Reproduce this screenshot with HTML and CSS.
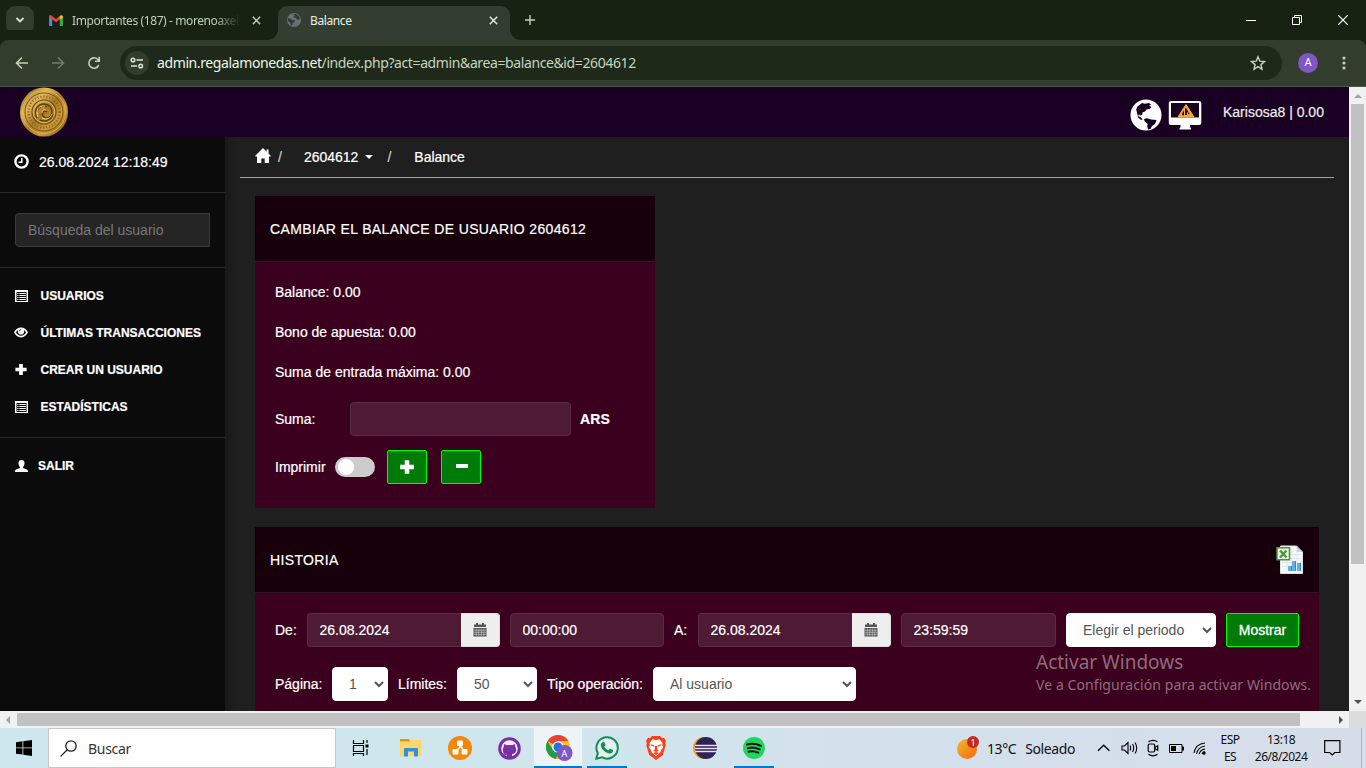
FILE: index.html
```
<!DOCTYPE html>
<html lang="es">
<head>
<meta charset="utf-8">
<title>Balance</title>
<link rel="stylesheet" href="styles.css">
</head>
<body>
<svg width="0" height="0" class="defs">
  <defs>
    <symbol id="list" viewBox="0 0 13 12"><path fill="#fff" fill-rule="evenodd" d="M0 0h13v12H0zM1.500 2v9h10V2z"/><path stroke="#fff" d="M2.300 3.500h1.200M4.300 3.500h6.500M2.300 5.500h1.200M4.300 5.500h6.500M2.300 7.500h1.200M4.300 7.500h6.500M2.300 9.500h1.200M4.300 9.500h6.500"/></symbol>
    <symbol id="plus" viewBox="0 0 14 14"><path fill="#fff" d="M5 1h4v4h4v4H9v4H5V9H1V5h4z"/></symbol>
    <symbol id="calendar" viewBox="0 0 14 14"><path fill="#555" d="M1 1.500h2V0h2v1.500h4V0h2v1.500h2v2.500H1z"/><path fill="#555" d="M.5 5h13V13.500H.5z"/><path stroke="#ccc" stroke-width=".6" d="M.8 7.300h12.400M.8 9.300h12.400M.8 11.300h12.400M3.300 5.500v7.500M5.800 5.500v7.500M8.300 5.500v7.500M10.800 5.500v7.500"/></symbol>
  </defs>
</svg>
<div class="screen">
  <div class="tabstrip">
    <div class="tab-search"><svg width="10" height="10" viewBox="0 0 10 10"><path d="M1.500 3l3.500 3.500L8.500 3" fill="none" stroke="#d8e5d2" stroke-width="1.800"/></svg></div>
    <div class="tab idle">
      <svg width="14" height="11" viewBox="0 0 14 11"><path fill="#4285f4" d="M0 2v8a1 1 0 0 0 1 1h2.200V3.800z"/><path fill="#34a853" d="M14 2v8a1 1 0 0 1-1 1h-2.200V3.800z"/><path fill="#ea4335" d="M0 2.300V1.500Q.5-.6 2.500.5L7 3.900 11 .8v3.500L7 7.300 0 2.300z"/><path fill="#fbbc04" d="M10.800 1l1-.7Q14-.3 14 2v.4l-3.200 2.300z"/></svg>
      <span class="tab-title fade">Importantes (187) - morenoaxel</span>
      <svg class="x" width="9" height="9" viewBox="0 0 9 9"><path d="M.8.8l7.400 7.400M8.200.8L.8 8.200" stroke="#bdd0b7" stroke-width="1.500"/></svg>
    </div>
    <div class="tab active">
      <svg width="14" height="14" viewBox="0 0 14 14"><circle cx="7" cy="7" r="7" fill="#686e72"/><path fill="#343e30" d="M1 5l2 .5 2 1.500 3 .3-.5 1.500-2 1.200v2L4 12.500 3 9.500 1 8zM6 1.500l1.500 1-.8 2 2.300.6 1 1.600 3-.5-1-3L9 1z"/></svg>
      <span class="tab-title">Balance</span>
      <svg class="x" width="9" height="9" viewBox="0 0 9 9"><path d="M.8.8l7.400 7.400M8.200.8L.8 8.200" stroke="#e1ebdc" stroke-width="1.500"/></svg>
    </div>
    <svg class="new-tab" width="10" height="10" viewBox="0 0 10 10"><path d="M5 0v10M0 5h10" stroke="#bdd0b7" stroke-width="1.400"/></svg>
    <div class="win-buttons">
      <svg width="10" height="10"><path d="M0 5.500h10" stroke="#fff"/></svg>
      <svg width="10" height="10" fill="none" stroke="#fff"><path d="M.5 2.500h7v7h-7zM2.500 2V.5h7v7H8"/></svg>
      <svg width="10" height="10"><path d="M0 0l10 10M10 0L0 10" stroke="#fff" stroke-width="1.200"/></svg>
    </div>
  </div>
  <div class="toolbar">
    <svg class="nav" width="14" height="14" fill="none" stroke="#c2d4bb" stroke-width="1.600"><path d="M13 7H2M7 1.500L1.500 7 7 12.500"/></svg>
    <svg class="nav" width="14" height="14" fill="none" stroke="#6d7c67" stroke-width="1.600"><path d="M1 7h11M7 1.500L12.500 7 7 12.500"/></svg>
    <svg class="nav" width="14" height="14" fill="none" stroke="#c2d4bb" stroke-width="1.600"><path d="M11.800 9.200A5.200 5.200 0 1 1 10.900 3.500L12.300 5M12.300 .8v4.400H8"/></svg>
    <div class="omnibox">
      <span class="site-info"><svg width="14" height="12" fill="none" stroke="#dbe7d6" stroke-width="1.500"><circle cx="3" cy="3" r="1.800"/><path d="M6.500 3H13M1 9h6"/><circle cx="10.700" cy="9" r="1.800"/></svg></span>
      <span class="url"><b>admin.regalamonedas.net</b>/index.php?act=admin&amp;area=balance&amp;id=2604612</span>
      <svg class="star" width="16" height="16" viewBox="0 0 16 16"><path d="M8 1.800l1.800 4.400 4.700.4-3.600 3 1.100 4.600L8 11.700l-4 2.500 1.100-4.600-3.600-3 4.700-.4z" fill="none" stroke="#c2d4bb" stroke-width="1.400"/></svg>
    </div>
    <span class="avatar">A</span>
    <svg class="dots" width="4" height="14" fill="#c2d4bb"><circle cx="2" cy="2" r="1.600"/><circle cx="2" cy="7" r="1.600"/><circle cx="2" cy="12" r="1.600"/></svg>
  </div>
  <div class="viewport">
    <div class="page">
      <header class="topbar">
        <svg class="coin" width="48" height="50" viewBox="0 0 48 50"><defs><linearGradient id="gold" x1="0" y1="0" x2="1" y2="1"><stop offset="0" stop-color="#7d5718"/><stop offset=".3" stop-color="#e3bb58"/><stop offset=".5" stop-color="#a87824"/><stop offset=".7" stop-color="#cd9c38"/><stop offset="1" stop-color="#6e450f"/></linearGradient></defs><ellipse cx="24" cy="25" rx="24" ry="24.500" fill="url(#gold)"/><g fill="none"><circle cx="24" cy="25" r="21.500" stroke="#d9b04c" stroke-width="1"/><circle cx="24" cy="25" r="19" stroke="#7b541a"/><circle cx="24" cy="25" r="15.500" stroke="#8a6120" stroke-width="2.500" stroke-dasharray="1 2"/><circle cx="24" cy="25" r="12" stroke="#6e4914" stroke-width="1.200"/><circle cx="24" cy="25" r="10.800" stroke="#dfb85a"/><path stroke="#60400f" stroke-width="1.500" d="M17 31c-4-7 0-14 7-14 5 0 8 4 8 8 0 5-6 8-9 4-2-3 1-6 4-4M20 33c6 3 12-1 13-6M17 25c1-5 6-8 10-5"/><path stroke="#f5d475" d="M18 30c-3-7 1-12 7-11M22 31c5 2 9 0 10-4M22 26c0-3 2-4 4-3"/></g></svg>
        <svg class="globe" width="32" height="32" viewBox="0 0 32 32"><circle cx="16" cy="16" r="15.500" fill="#fff"/><path fill="#190022" d="M7.500 7.500L12 4l3 .8 4-.8 2 1.500-2 1.300 2.500 1.200-1.500 1.800-3.500.6-1.500 2-2.500 1-.5 2.500-2 .5-1-1.500-.8 2 2 1 2.500 2.500-1.500.5-3-2.200L7 14l-.8-3.500zM14 20l3-.8 4 1.300 5.500.5-1.500 4-3 2-1.500 3-2.500.5-.8-3.500.5-2-3-2.500z"/></svg>
        <svg class="monitor" width="34" height="30" viewBox="0 0 34 30"><path fill="#fff" fill-rule="evenodd" d="M3 1h28a2.300 2.300 0 0 1 2.300 2.300v19.400A2.300 2.300 0 0 1 31 25H22v2l1 1.500v1H11.500v-1L12.500 27v-2H3A2.300 2.300 0 0 1 .8 22.700V3.300A2.300 2.300 0 0 1 3 1zM3 3v14.500h28V3z"/><path d="M18 4.500L26 17H10z" fill="#f9a934" stroke="#f9a934" stroke-linejoin="round"/><path fill="#190022" d="M17.800 7.500L21.700 14.300H20v-2h-1.100V15h-1.800V9zM16 10.500v4.800h-2l.3-2z"/></svg>
        <span class="account">Karisosa8 | 0.00</span>
      </header>
      <div class="columns">
        <aside class="sidebar">
          <div class="clock"><svg width="15" height="15" viewBox="0 0 15 15" fill="none" stroke="#fff"><circle cx="7.500" cy="7.500" r="6.100" stroke-width="2.400"/><path d="M7.800 4v4.200H4.500" stroke-width="1.500"/></svg><span>26.08.2024 12:18:49</span></div>
          <div class="search"><input type="text" placeholder="Búsqueda del usuario"></div>
          <nav class="menu">
            <a><svg width="13" height="12"><use href="#list"/></svg>USUARIOS</a>
            <a><svg class="eye" width="14" height="11" viewBox="0 0 14 11"><path fill="#fff" fill-rule="evenodd" d="M7 .5c3 0 5.500 2 7 4.800C12.500 8.500 10 10.500 7 10.500S1.500 8.500 0 5.300C1.500 2.500 4 .5 7 .5zM2 5.300C3 7.300 5 8.800 7 8.800s4-1.500 5-3.500c-.6-1-1.200-1.700-2.200-2.300a3.300 3.300 0 0 1-5.600 0C3.200 3.600 2.500 4.300 2 5.300z"/><circle cx="7" cy="4.500" r="3.100" fill="#fff"/><path d="M5.300 4.300q.2-1.600 1.700-1.700" fill="none" stroke="#0b0b0b" stroke-width=".8"/></svg>ÚLTIMAS TRANSACCIONES</a>
            <a><svg class="add" width="14" height="13"><use href="#plus"/></svg>CREAR UN USUARIO</a>
            <a><svg width="13" height="12"><use href="#list"/></svg>ESTADÍSTICAS</a>
          </nav>
          <div class="exit"><svg width="13" height="12" viewBox="0 0 13 12"><path fill="#fff" d="M6.500 0C8.500 0 9.600 1.200 9.500 3c0 1.800-.5 3-1.500 4v1l4 1.500c.8.400 1 1.200 1 2.500H0c0-1.300.2-2.100 1-2.500L5 8V7C4 6 3.500 4.800 3.500 3 3.400 1.200 4.500 0 6.500 0z"/></svg>SALIR</div>
        </aside>
        <main class="main">
          <div class="crumbs">
            <svg class="home" width="16" height="15" viewBox="0 0 16 15"><path fill="#fff" d="M8 0l3.500 3.500V1.500h2v4L16 8l-1 .8-1-.6V15H9.700v-4.500H6.300V15H2V8.200l-1 .6L0 8z"/></svg>
            <i>/</i><span class="id">2604612</span><b class="caret"></b><i class="sep">/</i><span>Balance</span>
          </div>
          <section class="panel balance">
            <h2>CAMBIAR EL BALANCE DE USUARIO 2604612</h2>
            <div class="body">
              <p>Balance: 0.00</p>
              <p>Bono de apuesta: 0.00</p>
              <p>Suma de entrada máxima: 0.00</p>
              <div class="amount"><label>Suma:</label><input type="text"><strong>ARS</strong></div>
              <div class="actions"><span>Imprimir</span><span class="switch"></span><button><svg width="16" height="16" viewBox="0 0 14 14"><use href="#plus"/></svg></button><button class="minus"><svg width="12" height="4"><path fill="#fff" d="M0 0h12v4H0z"/></svg></button></div>
            </div>
          </section>
          <section class="panel history">
            <h2>HISTORIA<svg width="28" height="30" viewBox="0 0 28 30"><path fill="#f6f8fa" stroke="#dbe1e6" d="M4.500 1h16L26.500 7v21.500h-22z"/><path fill="#cbd5dd" d="M20.500 1v6h6z"/><path stroke="#dfe6ec" d="M6 9.500h19M6 13.500h19M6 17.500h19M6 21.500h19M11 4v22M16 4v22M21 7v19"/><path fill="#65aee3" d="M12 21h4v5h-4zM16 16h4v10h-4zM21 18h4v8h-4z"/><path stroke="#3687c8" d="M15.500 21v5M19.500 16v10M24.500 18v8"/><path fill="#edf5e8" stroke="#4d9138" stroke-width="1.600" d="M1 2.800h12.500v12H1z"/><path d="M4 5.500l6.500 7M10.500 5.500L4 12.500" stroke="#4c9939" stroke-width="2.400"/></svg></h2>
            <div class="body">
              <div class="filters">
                <label class="de">De:</label><div class="date"><input type="text" value="26.08.2024"><span><svg width="14" height="14"><use href="#calendar"/></svg></span></div><input class="time" type="text" value="00:00:00"><label class="a">A:</label><div class="date"><input type="text" value="26.08.2024"><span><svg width="14" height="14"><use href="#calendar"/></svg></span></div><input class="time last" type="text" value="23:59:59"><select class="period"><option>Elegir el periodo</option></select><button>Mostrar</button>
              </div>
              <div class="filters second">
                <label class="pg">Página:</label><select class="s1"><option>1</option></select><label class="lim">Límites:</label><select class="s2"><option>50</option></select><label class="tipo">Tipo operación:</label><select class="s3"><option>Al usuario</option></select>
              </div>
            </div>
          </section>
        </main>
      </div>
    </div>
    <div class="vscroll"><i class="up"></i><div class="vthumb"></div><i class="down"></i></div>
    <div class="watermark"><div>Activar Windows</div><span>Ve a Configuración para activar Windows.</span></div>
  </div>
  <div class="hscroll"><i class="left"></i><div class="hthumb"></div><i class="right"></i><div class="corner"></div></div>
  <div class="taskbar">
    <div class="start"><svg width="16" height="16"><path d="M0 2.200l6.500-.9v6.200H0zM7.300 1.200L16 0v7.500H7.300zM0 8.300h6.500v6.300L0 13.800zM7.300 8.300H16V16l-8.700-1.200z"/></svg></div>
    <div class="find"><svg width="17" height="17" viewBox="0 0 17 17" fill="none" stroke="#222" stroke-width="1.300"><circle cx="11" cy="6" r="5.200"/><path d="M7.300 9.700L.6 16.400"/></svg><span>Buscar</span></div>
    <div class="apps">
      <div class="app first"><svg width="17" height="16" fill="none" stroke="#000"><path d="M1.500 0v3.500h10V0M1.500 5.500h10v6h-10zM1.500 16v-2.500h10V16M15 0v3M15 9v6" stroke-width="1.200"/><path d="M13.500 4.500h3v3h-3z" fill="#000" stroke="none"/></svg></div>
      <div class="app"><svg width="22" height="20"><path fill="#d99b0c" d="M0 1h9l1.500 2-1.500 2H0z"/><path fill="#ffd768" d="M0 3.500h8.500L10.500 2H21v16H0z"/><path fill="#338fd6" d="M4 18.500v-7.500q0-1 1-1h12q1 0 1 1v7.500h-4v-5H8v5z"/></svg></div>
      <div class="app"><svg width="24" height="24"><circle cx="12" cy="12" r="12" fill="#f48706"/><path d="M12 7v4L7.500 16M12 9l4.500 7" stroke="#fff" stroke-width="1.600" fill="none"/><g fill="#fff"><rect x="9" y="4.500" width="6" height="5.500" rx="1"/><rect x="4.500" y="13" width="6" height="5.500" rx="1"/><rect x="13.500" y="13" width="6" height="5.500" rx="1"/></g></svg></div>
      <div class="app"><svg width="23" height="23"><circle cx="11.500" cy="11.500" r="11.300" fill="#7b2fa5"/><circle cx="11.500" cy="11.500" r="8.300" fill="#f2eaf6"/><path fill="#7b2fa5" d="M9 20.500v-3.200c-2.800-.4-4.200-2-4.200-4.600 0-1.200.4-2.200 1.100-2.900-.2-.9-.1-1.700.2-2.500 1 0 1.800.5 2.500 1 1.800-.4 4-.4 5.800 0 .7-.5 1.500-1 2.500-1 .3.800.4 1.600.2 2.500.7.700 1.100 1.700 1.100 2.900 0 2.600-1.400 4.200-4.200 4.600v3.200z"/><path d="M5.500 15.500q1 2.500 3.500 2.300" fill="none" stroke="#7b2fa5" stroke-width="1.200"/></svg></div>
      <div class="app open current"><svg class="chrome" width="27" height="27"><circle cx="12" cy="12" r="12" fill="#fbc116"/><path fill="#ea4335" d="M12 12L1.600 6A12 12 0 0 1 22.400 6H12z"/><path fill="#1e9e4b" d="M12 24A12 12 0 0 1 1.600 6L7 15l5 3-2 5.800z"/><circle cx="12" cy="12" r="5.800" fill="#fff"/><circle cx="12" cy="12" r="4.500" fill="#1a73e8"/><circle cx="18.500" cy="18" r="8" fill="#7e57c2"/><text x="18.500" y="21.500" text-anchor="middle" font-size="9" fill="#fff">A</text></svg></div>
      <div class="app open"><svg width="24" height="24" viewBox="0 0 24 24"><path d="M1.300 22.700l1.500-5.600A10.700 10.700 0 1 1 6.900 21.200z" fill="#e3f0ef" stroke="#168d58" stroke-width="2"/><path fill="#168d58" d="M7 6.500l1.500-.7q.7 0 1 .7l.9 2q.2.700-.3 1.200l-.8 1q1.400 2.500 4 3.600l1.200-1.300q.4-.4.900-.2l2.100 1q.7.400.5 1.200-.4 2-2.300 2.500-2.500.5-5.900-2-3.400-2.600-4-5.500Q5.400 8 7 6.500z"/></svg></div>
      <div class="app"><svg width="20" height="24" viewBox="0 0 20 24"><path fill="#fc3f16" d="M6 0h8l2 2 2-.2L20 5l-.8 2 .5 2.500-3 9.500-6.700 5-6.700-5-3-9.500L.8 7 0 5l2-3.200L4 2z"/><path fill="#fff" d="M10 4l3.500-.7L16.500 7l-.2 2.500 1 1.500-2.800 4 .2 1-4.700 4-4.700-4 .2-1-2.800-4 1-1.500L3.500 7l3-3.700z"/><path fill="#fc3f16" d="M4.500 8l4 1.500-.4 1.300-2.600-1zM15.500 8l-4 1.500.4 1.300 2.600-1zM9 10h2l.3 3.500 1.500 1-2.800 1.500-2.800-1.500 1.500-1zM7 17l3-1 3 1-3 2z"/></svg></div>
      <div class="app"><svg width="24" height="22"><circle cx="11" cy="11" r="11" fill="#f89820"/><circle cx="13" cy="11" r="11" fill="#2c2255"/><path d="M2 8.500h22M1.800 11.500h22.400M2 14.500h22" stroke="#e5e1f0" stroke-width="1.700"/></svg></div>
      <div class="app open"><svg width="22" height="22"><circle cx="11" cy="11" r="11" fill="#1ed760"/><path d="M4 7.500q7-2 14 1.300M4.700 11.200q6-1.600 12 1.200M5.300 14.700q5-1.300 10 1" stroke="#111" stroke-width="2" fill="none" stroke-linecap="round"/></svg></div>
    </div>
    <div class="weather"><svg width="24" height="24"><defs><linearGradient id="sun" x1="0" y1="0" x2="1" y2="1"><stop stop-color="#f4b72d"/><stop offset="1" stop-color="#f2690d"/></linearGradient></defs><circle cx="10" cy="13" r="10" fill="url(#sun)"/><circle cx="16" cy="6" r="6" fill="#c42b1c"/><text x="16" y="9.500" text-anchor="middle" font-size="9" fill="#fff">1</text></svg><span class="temp">13°C</span><span class="sky">Soleado</span></div>
    <div class="tray">
      <svg width="14" height="10" fill="none" stroke="#000" stroke-width="1.300"><path d="M1 7.800l5.700-5.600 5.700 5.600"/></svg>
      <svg width="17" height="14" fill="none" stroke="#000" stroke-width="1.100"><path d="M1 5h2.500L7 1.500v11L3.500 9H1zM9 4.500q1.400 2.500 0 5M11.500 3q2.400 4 0 8M14 1.500q3.400 5.500 0 11"/></svg>
      <svg width="12" height="18" fill="none" stroke="#000" stroke-width="1.200"><rect x="1.200" y="5" width="6.500" height="8" rx="1.500"/><path d="M7.700 8.500l3-1.700v4.500l-3-1.700M1.500 2.800q4.500-3 9 0M1.500 15.300q4.500 3 9 0"/></svg>
      <svg width="15" height="9"><path d="M.5.500h12.500v8H.5z" fill="none" stroke="#000"/><path d="M2 2h5v5H2zM13 2.500h2v4h-2z"/></svg>
      <svg width="14" height="13" fill="none" stroke="#000" stroke-width="1.100"><path d="M1 11Q2.500 2 12 1M3.500 12Q5 5 12 4M6.200 12Q7.500 7.500 12 7M9 12q.5-1.500 3-2"/><circle cx="11" cy="11" r="1.200" fill="#000"/></svg>
    </div>
    <div class="lang"><span>ESP</span><span>ES</span></div>
    <div class="time-box"><span>13:18</span><span class="day">26/8/2024</span></div>
    <svg class="notes" width="17" height="16" fill="none" stroke="#000" stroke-width="1.200"><path d="M.7.700h15.200v11.800H10.800L8.200 15l-2.600-2.500H.7z"/></svg>
    <div class="desk"></div>
  </div>
</div>
</body>
</html>
```
FILE: styles.css
```
* { box-sizing: border-box; }
body { margin: 0; overflow: hidden; background: #1f1f1f; }
svg { display: block; flex: none; }
.defs { position: absolute; }
.screen { width: 1366px; height: 768px; display: flex; flex-direction: column; overflow: hidden; font-family: "Liberation Sans", Arial, sans-serif; font-size: 14px; color: #fff; }
.screen span, .screen label { white-space: nowrap; }
input, select, button { font: inherit; }

/* Browser window */
.tabstrip { height: 40px; flex: none; background: #182213; display: flex; align-items: center; font-family: "Noto Sans", sans-serif; font-size: 12px; }
.tab-search { width: 28px; height: 28px; margin-left: 6px; border-radius: 9px; background: #323d2e; display: flex; align-items: center; justify-content: center; }
.tab { display: flex; align-items: center; }
.idle { width: 244px; padding-left: 15px; color: #bdd0b7; }
.active { position: relative; width: 232px; height: 34px; align-self: flex-end; padding: 0 12px 6px 9px; border-radius: 9px 9px 0 0; background: #343e30; color: #e8f0e4; }
.active::before, .active::after { content: ""; position: absolute; bottom: 0; width: 10px; height: 10px; }
.active::before { left: -10px; background: radial-gradient(circle at 0 0, transparent 9.5px, #343e30 10px); }
.active::after { right: -10px; background: radial-gradient(circle at 100% 0, transparent 9.5px, #343e30 10px); }
.tab-title { margin-left: 9px; letter-spacing: -.4px; }
.fade { width: 170px; letter-spacing: -.4px; -webkit-mask-image: linear-gradient(90deg, #000 84%, transparent 99%); mask-image: linear-gradient(90deg, #000 84%, transparent 99%); }
.idle .x { margin-left: 10px; }
.active .x { margin-left: auto; }
.new-tab { margin-left: 15px; }
.win-buttons { margin-left: auto; margin-right: 18px; display: flex; gap: 36px; }
.toolbar { height: 47px; flex: none; border-bottom: 1px solid #4c5648; display: flex; align-items: center; padding-left: 15px; border-radius: 8px 8px 0 0; background: #323d2e; box-shadow: 0 -10px 0 0 #182213; }
.nav { margin-right: 22px; }
.omnibox { width: 1162px; height: 34px; margin-left: -3px; border-radius: 17px; background: #1e291a; display: flex; align-items: center; padding: 0 16px 0 5px; }
.site-info { width: 24px; height: 24px; border-radius: 12px; background: #323d2e; display: flex; align-items: center; justify-content: center; }
.url { margin: 0 0 1px 8px; font-family: "Noto Sans", sans-serif; font-size: 14px; letter-spacing: -.39px; color: #c5d4bf; }
.url b { font-weight: 400; color: #eef5eb; }
.star { margin-left: auto; }
.avatar { width: 20px; height: 20px; margin-left: 16px; border-radius: 10px; background: #7e57c2; text-align: center; font: 11px/20px Roboto, sans-serif; }
.dots { margin-left: 24px; }

.viewport { position: relative; height: 624px; flex: none; display: flex; }
.page { width: 1349px; overflow: hidden; -webkit-text-stroke: .2px; }
.topbar { height: 50px; background: #190022; display: flex; padding-left: 20px; }
.globe { margin: 12px 0 0 1062px; }
.monitor { margin: 13px 0 0 6px; }
.account { margin: 17px 0 0 21px; color: #eee; line-height: 16px; }
.columns { display: flex; height: 574px; }

/* Sidebar */
.sidebar { width: 225px; flex: none; background: #0b0b0b; }
.clock { height: 56px; padding: 0 0 6px 14px; border-bottom: 1px solid #292929; display: flex; align-items: center; gap: 10px; }
.search { height: 75px; padding: 20px 15px; border-bottom: 1px solid #292929; -webkit-text-stroke: 0; }
.search input { display: block; width: 195px; height: 34px; padding: 6px 12px; border: 1px solid #3c3c3c; border-radius: 4px 0 0 4px; background: #252525; outline: 0; }
.search input::placeholder { color: #777; }
.menu { height: 170px; padding-top: 9px; border-bottom: 1px solid #292929; font-size: 12px; font-weight: 700; }
.menu a { display: flex; align-items: center; height: 37px; padding-left: 15px; }
.menu svg { margin-right: 12.5px; }
.menu .eye, .menu .add { margin: 0 12.5px 0 -1px; }
.exit { display: flex; align-items: center; height: 55px; padding-left: 15px; gap: 10px; font-size: 12px; font-weight: 700; }

/* Content */
.main { width: 1124px; padding: 0 15px; background: linear-gradient(90deg, #191919, #1f1f1f 15px); }
.crumbs { height: 41px; padding-left: 14px; border-bottom: 1px solid #c5ab14; display: flex; align-items: center; }
.crumbs .home { margin: 0 0 3px .5px; }
.crumbs i { margin-left: 7.5px; font-style: normal; color: #ccc; }
.crumbs .id { margin-left: 22px; }
.crumbs .caret { margin-left: 7px; border: 4px solid transparent; border-top-color: #fff; border-bottom: 0; }
.crumbs .sep { margin: 0 23px 0 14px; }
.panel { margin-left: 15px; background: #3b001d; }
.panel h2 { height: 66px; margin: 0; padding: 0 15px; border-bottom: 1px solid #321627; background: #170009; font-size: 14px; font-weight: 400; letter-spacing: .36px; display: flex; align-items: center; justify-content: space-between; }
.body { padding: 20px; }
.balance { width: 400px; height: 312px; margin-top: 18px; }
.balance p { height: 20px; margin: 0 0 20px; line-height: 20px; }
.panel input { height: 34px; padding: 6px 12px 6px 11.5px; border: 1px solid #5b2c45; border-radius: 4px; background: #4f1a34; color: #fff; outline: 0; }
.panel button { height: 34px; padding: 0; border: 1px solid #00ff00; border-radius: 2px; background: #007a08; color: #fff; display: flex; align-items: center; justify-content: center; }
.amount { display: flex; align-items: center; }
.amount label { width: 75px; }
.amount input { width: 221px; margin-right: 9px; }
.amount strong { letter-spacing: .2px; }
.actions { display: flex; align-items: center; margin-top: 14px; }
.actions button { width: 40px; margin-right: 14px; }
.panel .minus { padding: 0 0 2px 2px; }
.switch { width: 40px; height: 20px; margin: 0 12px 0 9px; padding: 2px; border-radius: 10px; background: #ccc; }
.switch::before { content: ""; display: block; width: 16px; height: 16px; border-radius: 8px; background: #fff; margin-left: 1px; }
.history { width: 1064px; height: 200px; margin-top: 19px; }
.filters { display: flex; align-items: center; }
.second { margin-top: 20px; }
.date { display: flex; width: 193px; }
.panel .date input { width: 154px; border-right: 0; border-radius: 4px 0 0 4px; }
.date span { width: 39px; height: 34px; border: 1px solid #ddd; border-left: 0; border-radius: 0 4px 4px 0; background: #eee; display: flex; align-items: center; justify-content: center; }
.de { width: 32px; }
.time { width: 154px; margin: 0 10px; }
.time.last { width: 155px; }
.a { width: 24px; }
.panel select { height: 34px; padding: 6px 12px; border: 1px solid #fff; border-radius: 4px; background: #fff; color: #555; -webkit-text-stroke: 0; }
.filters .period { width: 150px; margin-right: 10px; }
.filters button { width: 73px; -webkit-text-stroke: .3px #fff; }
.pg { width: 57px; }
.s1 { width: 56px; margin-right: 10px; }
.lim { width: 59px; }
.s2 { width: 80px; margin-right: 10px; }
.tipo { width: 106px; }
.s3 { width: 203px; }
.watermark { position: absolute; left: 1036px; top: 563px; font-family: "Noto Sans", sans-serif; color: #8e6c7d; white-space: nowrap; }
.watermark div { font-size: 19px; line-height: 24px; }
.watermark span { display: block; margin-top: 1px; font-size: 14px; line-height: 20px; letter-spacing: .08px; }

/* Scrollbars */
.vscroll { width: 17px; background: #f1f1f1; display: flex; flex-direction: column; align-items: center; }
.vthumb { width: 13px; height: 460px; margin-top: 6px; background: #c1c1c1; }
.up { margin-top: 7px; border: 4px solid transparent; border-bottom-color: #a3a3a3; border-top: 0; }
.down { margin-top: auto; margin-bottom: 7px; border: 4px solid transparent; border-top-color: #505050; border-bottom: 0; }
.hscroll { height: 17px; flex: none; background: #f1f1f1; display: flex; align-items: center; }
.left { margin-left: 6px; border: 4px solid transparent; border-right-color: #a3a3a3; border-left: 0; }
.hthumb { width: 1283px; height: 13px; margin-left: 7px; background: #c1c1c1; }
.right { margin-left: 39px; border: 4px solid transparent; border-left-color: #505050; border-right: 0; }
.corner { width: 17px; height: 17px; margin-left: auto; background: #dcdcdc; }

/* Taskbar */
.taskbar { height: 40px; flex: none; display: flex; align-items: center; background: linear-gradient(90deg, #cee6ed, #d0e6ed 40%, #d3e0ec 65%, #d6dde9); font-family: "Noto Sans", sans-serif; color: #111; }
.start { width: 48px; padding-left: 16px; }
.find { width: 288px; height: 40px; padding-left: 11px; border: 1px solid #c5c9ca; background: #fff; display: flex; align-items: center; gap: 11px; color: #333; letter-spacing: -.3px; }
.apps { display: flex; gap: 1px; height: 40px; padding-left: 2px; }
.app { width: 48px; height: 40px; display: flex; align-items: center; justify-content: center; }
.first { padding-right: 4px; }
.open { background: linear-gradient(#0078d4, #0078d4) 50% 100% / 40px 2px no-repeat; }
.current { background: #edf4f8; border-bottom: 2px solid #0078d4; }
.chrome { margin: 3px 0 0 2px; }
.weather { display: flex; align-items: center; margin-left: 179px; }
.temp { margin-left: 6px; letter-spacing: -.4px; }
.sky { margin-left: 9px; letter-spacing: -.4px; }
.tray { display: flex; align-items: center; gap: 9.5px; margin-left: 22px; }
.lang, .time-box { display: flex; flex-direction: column; align-items: center; font-size: 12px; line-height: 17px; letter-spacing: -.5px; }
.lang { width: 20px; margin-left: 13px; }
.time-box { width: 54px; margin-left: 14px; }
.notes { margin-left: 16px; }
.desk { width: 5px; height: 40px; margin-left: auto; border-left: 1px solid #a9b3bf; }
```
